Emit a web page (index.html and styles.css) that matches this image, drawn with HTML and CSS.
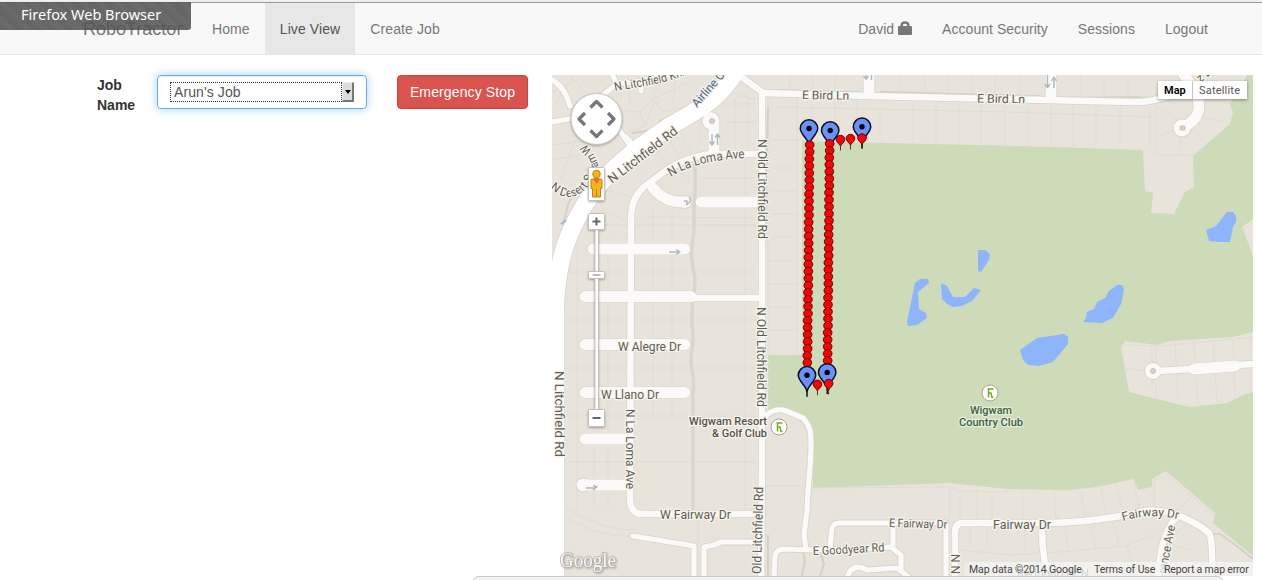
FILE: index.html
```html
<!DOCTYPE html>
<html lang="en">
<head>
<meta charset="utf-8">
<title>RoboTractor - Live View</title>
<link rel="stylesheet" href="styles.css">
</head>
<body>
<nav class="navbar">
  <a class="brand">RoboTractor</a>
  <ul class="nav">
    <li class="nav-item">Home</li>
    <li class="nav-item active">Live View</li>
    <li class="nav-item">Create Job</li>
  </ul>
  <ul class="nav nav-right">
    <li class="nav-item">David
      <svg class="lock" viewBox="0 0 14 14"><path d="M3.700 6V4.200Q3.700 1.500 7 1.500T10.300 4.200V6" fill="none" stroke="#777" stroke-width="2.500"/><rect x="0" y="5" width="14" height="9" rx="1" fill="#777"/></svg>
    </li>
    <li class="nav-item">Account Security</li>
    <li class="nav-item">Sessions</li>
    <li class="nav-item">Logout</li>
  </ul>
</nav>
<div class="window-label">Firefox Web Browser</div>

<main class="content">
  <label class="job-label">Job Name</label>
  <div class="select">
    <span class="select-value">Arun's Job</span>
    <span class="select-arrow"></span>
  </div>
  <button class="stop">Emergency Stop</button>

  <div class="map">
  <svg class="map-canvas" viewBox="552 75 701 501">
    <defs>
      <g id="roads-s">
        <path d="M552 80C561 84 566 92 570 106"/><path d="M552 122L574 118"/><path d="M604 94L617 84L640 81L684 72"/><path d="M612 74L617 85"/><path d="M641 84V91"/>
        <path d="M618 128L634 151"/><path d="M626 137L636 148"/>
        <path d="M633 536L694 546V578"/><path d="M704 578V547L714 545L721 542H756"/>
        <path d="M764 418C770 411 778 408 786 411L803 418C810 425 811 433 811 442C811 470 808 480 807 510L804 535L806 549"/>
        <path d="M774 578L775 556Q776 550 783 549L815 550L860 549L891 547L901 555V568"/>
        <path d="M830 547L832 528Q833 523 840 523H946V578"/><path d="M893 525V545"/>
        <path d="M847 578C850 568 857 564 867 570L897 568L910 578"/>
      </g>
      <g id="roads-m">
        <path d="M736 73L762 92"/><path d="M762 92V474L761 578"/><path d="M762 93L870 96L1000 99L1130 102C1155 103 1160 96 1195 92"/>
        <path d="M764 154H716C700 154 685 159 668 169L645 186C634 196 631 206 631 220L630 495Q629 515 644 514H758"/>
        <path d="M690 298H762"/>
        <path d="M955 578V532Q955 523 963 523H1045C1080 523 1120 517 1145 511C1170 507 1200 525 1209 533Q1213 540 1212 578"/>
        <path d="M1042 524C1042 545 1043 550 1047 578"/><path d="M1176 517C1163 535 1160 550 1158 578"/>
        <path d="M1156 371L1192 369"/><path d="M1236 365L1254 364"/>
      </g>
      <g id="roads-l">
        <path d="M869 70V92"/><path d="M1051 70V96"/>
        <path d="M1181 70L1193 88Q1209 115 1182 128"/>
        <path d="M711 121L714 124V150"/><path d="M711 118V121"/>
        <path d="M653 188C661 198 672 203 686 202"/>
        <path d="M701 202H760"/><path d="M593 249H685"/><path d="M585 296.500H691"/><path d="M585 344.500H685"/><path d="M585 392.500H685"/><path d="M585 439H628"/><path d="M583 485H628"/>
        <path d="M1194 369L1235 366"/>
      </g>
      <path id="highway" d="M738 68C719 100 700 109 670 126L637 149C615 167 600 180 584 206C572 226 557 253 555 310V590"/>
    </defs>
    <rect x="552" y="75" width="701" height="501" fill="#e8e4dc"/>
    <path fill="#cddbb9" d="M802 141L1020 146L1143 150L1145 191L1153 193L1151 213L1174 214L1185 192L1194 187L1193 156L1230 124L1233 112L1230 104L1236 94L1247 75H1253V219L1242 227L1253 256V332L1233 337L1170 341L1158 345L1125 341L1121 347L1129 392L1190 407L1227 403L1243 395L1253 392V556L1213 523L1215 513L1166 471L1152 479V487L1138 490L1134 479L1097 487L1068 490L1007 489L950 483L813 488L811 430L785 410L768 415V355H802Z"/>
    <path fill="#d2e2be" d="M1120 99L1160 98L1145 96Z"/>

    <!-- parcel boundaries -->
    <path class="lots" d="M768 98V355M797 98V355M768 140H802M768 168H797M768 191H797M768 214H797M768 237H797M768 261H797M768 284H797M768 307H797M768 330H797M775 107L1010 112L1150 117M812 98V140M835 98V140M857 98V141M880 106V142M913 103V143M936 103V143M959 104V144M981 104V145M1005 105V146M1028 106V146M1051 106V147M1073 106V147M1096 106V148M1120 106V148M1150 107V148M1156 107V155H1193M1156 106L1180 120M1156 137L1176 130M1181 137L1179 155M1196 133L1207 145M1206 118L1230 123M790 75V88M813 75V88M835 75V89M900 75V90M925 75V91M948 75V91M972 75V92M995 75V93M1020 75V94M1081 75V95M1104 75V95M1128 75V95
      M567 225H760M567 272H760M567 320H760M567 368H760M567 416H760M567 462H760M577 230V510M594 226V508M608 235V510M653 210V416M672 210V416M745 160V510M700 178H760M700 226H760M698 508V576M565 508C595 522 605 530 635 530M565 518C595 532 605 536 635 536M764 486H813M813 488L950 487L960 491L1010 492M950 488V520M960 491V520M977 491V520M992 492V520M1023 493V520M1054 492L1056 520M1081 491L1085 518M1101 488L1106 516M1116 484L1123 512M1134 482L1139 508M1154 480V508M1191 497L1174 513M1154 480L1168 476L1213 514M970 527V548M987 527V548M1025 528V552M960 550L1010 555L1060 552L1125 546L1155 534M1065 527L1068 548M1091 525L1096 549M1113 521L1119 546M1127 546L1135 574M1166 543L1190 550M1190 520L1166 543
      M1125 345L1162 346L1253 337M1152 346V390M1156 346V397M1175 342L1178 402M1194 341L1198 405M1213 340L1217 402M1233 338L1235 397M1250 334V390M1125 368L1145 371M1243 230L1253 222
      M555 105L575 75M570 75L585 92M585 75L602 96M552 92L567 85M630 105L628 75M651 102L663 77M672 105L676 80M640 112L655 98L690 82M645 126L655 101L663 112L690 106M610 110L640 112L645 126L625 134M552 145L590 140M552 160L580 155M560 180L575 140M600 210L625 220M606 190L634 198M632 165L645 177M655 150L668 164M668 140L679 155M681 132L690 150M700 118L700 143M725 90L755 100M723 104H758M727 122H757M735 98V148M748 100V148M645 217L760 218M670 168L692 180"/>
    <path class="trail creek" d="M694 164C698 185 693 200 694 220S690 240 692 260S697 270 693 300S696 330 692 350S696 370 693 395V510"/>
    <path class="trail" d="M632 133C650 131 657 129 660 121C672 116 684 112 698 104S718 84 727 75M563 226C567 212 566 198 580 190M768 107L765 250V420M778 90L860 92M880 92L1040 96M1062 98L1140 97M1211 534H1220C1230 540 1240 549 1253 559M803 552L805 560L802 576M820 552L824 564L820 576M768 535V576"/>

    <use href="#roads-s" class="case-s"/><use href="#roads-m" class="case-m"/><use href="#roads-l" class="case-l"/><use href="#highway" class="case-h"/>
    <g class="case-dot"><circle cx="711" cy="121" r="9.500"/><circle cx="583" cy="485" r="7.500"/><circle cx="1182" cy="128" r="9.500"/><circle cx="1153" cy="371" r="9"/><circle cx="685" cy="202" r="7"/></g>
    <use href="#roads-s" class="fill-s"/><use href="#roads-m" class="fill-m"/><use href="#roads-l" class="fill-l"/><use href="#highway" class="fill-h"/>
    <g fill="#fbfaf8"><circle cx="711" cy="121" r="8.500"/><circle cx="583" cy="485" r="6.500"/><circle cx="1182" cy="128" r="8.500"/><circle cx="1153" cy="371" r="8"/><circle cx="685" cy="202" r="6"/></g>
    <g class="island"><circle cx="712" cy="121" r="2.500"/><rect x="1180" y="126" width="5" height="4" rx="1"/><circle cx="1153" cy="371" r="2.500"/></g>
    <path d="M552 300H564V576H552Z" fill="#fff"/>
    <g class="oneway">
      <path d="M712 145V134M709.500 141.500L712 145L714.500 141.500M717.500 145V134M715 137.500L717.500 134L720 137.500"/>
      <path d="M1047.500 75V87M1045 84L1047.500 87.500L1050 84M1054 88V78M1051.500 81L1054 77L1056.500 81M866 75V79M863.500 76L866 79L868.500 76M871.500 75V80M669 252H679M676 249.500L680 252L676 254.500M586 488H596M593 485.500L597 487L593 490M684 201H687V205M690 197V202L686 205"/>
    </g>
    <path d="M561 224L566 220" stroke="#a5b8d0" stroke-width="2"/>

    <g fill="#8eb5fb">
      <path d="M1227 212L1233 212L1236 216V222L1233 227L1230 242H1220L1209 241L1206 230L1216 226Z"/>
      <path d="M978 250H985L990 254L989 260L981 272L978 271Z"/>
      <path d="M915 283L920 279H928L929 283L918 292L919 309L926 313L927 318L917 325L908 326L907 322Z"/>
      <path d="M941 283L947 286L953 297H965L974 288L981 290L972 301L962 306L953 307L947 304L942 299Z"/>
      <path d="M1083 322L1086 318L1087 312L1094 309L1097 302L1105 298L1109 291L1117 285H1122L1124 289L1121 304L1113 318L1102 323Z"/>
      <path d="M1020 350L1037 338L1064 334L1068 337V344L1053 362L1039 366L1028 365L1023 360Z"/>
    </g>

    <!-- street names -->
    <defs>
      <path id="p-knolls" d="M615 91C640 86 660 86 690 73"/>
      <path id="p-laloma" d="M671 177Q697 160 747 158"/>
      <path id="p-desert" d="M550 188C570 207 590 195 600 160"/>
      <path id="p-dream" d="M599 172Q599 154 578 137"/>
      <path id="p-goodyear" d="M813 555Q845 554 888 551"/>
      <path id="p-fairway" d="M1123 521Q1152 512 1182 520"/>
    </defs>
    <g class="street">
      <text><textPath href="#p-knolls" textLength="72">N Litchfield Knl</textPath></text>
      <text class="big"><textPath href="#p-laloma" textLength="77">N La Loma Ave</textPath></text>
      <text><textPath href="#p-desert" textLength="54">N Desert S</textPath></text>
      <text><textPath href="#p-dream" textLength="32">eam W</textPath></text>
      <text class="airline" transform="translate(697 108) rotate(-49)" textLength="50">Airline Cir</text>
      <text class="big" transform="translate(612 184) rotate(-37.500)" textLength="84">N Litchfield Rd</text>
      <text x="802" y="99" textLength="47" transform="rotate(1 802 100)">E Bird Ln</text>
      <text x="977" y="102.500" textLength="48" transform="rotate(1 977 102)">E Bird Ln</text>
      <text class="big" transform="translate(757.500 139) rotate(90)" textLength="100">N Old Litchfield Rd</text>
      <text class="big" transform="translate(757 307) rotate(90)" textLength="100">N Old Litchfield Rd</text>
      <text class="big" transform="translate(761 574) rotate(-88.500)" textLength="87">Old Litchfield Rd</text>
      <text class="big" transform="translate(555 371) rotate(90)" textLength="86">N Litchfield Rd</text>
      <text x="618" y="351" textLength="63">W Alegre Dr</text>
      <text x="601" y="398.500" textLength="58">W Llano Dr</text>
      <text x="660" y="518.500" textLength="71">W Fairway Dr</text>
      <text class="big" transform="translate(625.500 409) rotate(90)" textLength="80">N La Loma Ave</text>
      <text x="889" y="527" textLength="58" transform="rotate(1.500 889 527)">E Fairway Dr</text>
      <text x="993" y="528.500" textLength="58">Fairway Dr</text>
      <text><textPath href="#p-goodyear" textLength="72">E Goodyear Rd</textPath></text>
      <text><textPath href="#p-fairway" textLength="56">Fairway Dr</textPath></text>
      <text transform="translate(951 554) rotate(90)" textLength="20">N N</text>
      <text transform="translate(1166 574) rotate(-79)" textLength="49">rence Ave</text>
      <text transform="translate(1200 83) rotate(-38)">ᴢ D</text>
      <text x="1017" y="578" textLength="72">Redondo Dr N</text>
    </g>
    <g class="place">
      <text x="767" y="424.500" text-anchor="end" textLength="78">Wigwam Resort</text>
      <text x="767" y="436.500" text-anchor="end" textLength="55">&amp; Golf Club</text>
      <g class="park"><text x="991" y="413.500" text-anchor="middle" textLength="42">Wigwam</text>
      <text x="991" y="425.500" text-anchor="middle" textLength="64">Country Club</text></g>
    </g>
    <g id="golf-icons">
      <g transform="translate(779 427)"><circle r="8" class="poi"/><path class="golfer" d="M-2.500 -4H3.500M-1.500 -4V4.500M-1.500 0H1L2 4.500H3.500"/></g>
      <g transform="translate(990 393)"><circle r="8" class="poi"/><path class="golfer" d="M-2.500 -4H3.500M-1.500 -4V4.500M-1.500 0H1L2 4.500H3.500"/></g>
    </g>

    <g id="pins"></g>

    <text class="logo" x="560" y="566.500" textLength="56">Google</text>

    <!-- pan, street view and zoom controls -->
    <g class="controls">
      <circle cx="596.500" cy="119" r="25.500" class="pan"/>
      <path class="chev" d="M590.500 107.500L596.500 101.500L602.500 107.500M590.500 130.500L596.500 136.500L602.500 130.500M585 113L579 119L585 125M608 113L614 119L608 125"/>
      <rect x="588.500" y="167.500" width="16" height="33" rx="1" class="ctl"/>
      <g class="pegman"><path d="M591 179.500Q596.500 177 602 179.500V188.500H600.500V197H592.500V188.500H591Z"/><circle cx="596.500" cy="174" r="3.800"/><path d="M593 179H600L596.500 183.500Z" class="bib"/><path d="M596.500 189V197" /></g>
      <rect x="595" y="230" width="3.500" height="180" class="track"/>
      <rect x="588.500" y="213.500" width="16" height="16" rx="1" class="ctl"/><path d="M592.500 221.500H600.500M596.500 217.500V225.500" class="sign"/>
      <rect x="588.500" y="271.500" width="16" height="7" rx="1" class="ctl"/><path d="M592.500 275H600.500" class="sign thin"/>
      <rect x="588.500" y="409.500" width="16" height="17" rx="1" class="ctl"/><path d="M592.500 418H600.500" class="sign"/>
    </g>
  </svg>
    <div class="map-type"><span class="type-on">Map</span><span class="type-off">Satellite</span></div>
    <div class="credits"><span class="c1">Map data ©2014 Google</span><span class="c2">Terms of Use</span><span class="c3">Report a map error</span></div>
  </div>
</main>
<div class="bottom-bar"></div>
<script src="pins.js"></script>
</body>
</html>
```
FILE: pins.js
```js
const layer = document.getElementById('pins');

function add(tag, attrs) {
  const el = document.createElementNS('http://www.w3.org/2000/svg', tag);
  for (const k in attrs) el.setAttribute(k, attrs[k]);
  layer.appendChild(el);
}
function waypoint(x, y) {
  add('path', {class: 'pin-red', d: `M${x} ${y + 11}V${y + 7}C${x} ${y + 5} ${x - 4.4} ${y + 3} ${x - 4.4} ${y}A4.4 4.2 0 0 1 ${x + 4.4} ${y}C${x + 4.4} ${y + 3} ${x} ${y + 5} ${x} ${y + 7}`});
}
function corner(x, y) {
  add('path', {class: 'pin-blue', d: `M${x} ${y + 21.5}V${y + 17}C${x} ${y + 11} ${x - 8.7} ${y + 6} ${x - 8.7} ${y}A8.7 8.7 0 0 1 ${x + 8.7} ${y}C${x + 8.7} ${y + 6} ${x} ${y + 11} ${x} ${y + 17}`});
  add('circle', {cx: x, cy: y, r: 2.7});
}
function row(x0, x1, y0, y1, n) {
  for (let i = 0; i < n; i++) {
    const t = i / (n - 1);
    waypoint(Math.round((x0 + (x1 - x0) * t) * 3) / 3, y0 + (y1 - y0) * t);
  }
}

corner(809, 128.5);
corner(830.2, 130.5);
corner(862, 126.8);
row(809.6, 807.4, 145, 362.8, 32);
row(829.6, 827.5, 143.7, 360.8, 32);
waypoint(840.5, 139.5);
waypoint(850.5, 138.5);
waypoint(862, 138);
corner(807, 375.3);
corner(827.2, 372.4);
waypoint(817.5, 384.2);
waypoint(828.6, 383.5);

document.querySelectorAll('[textLength]').forEach(t => t.setAttribute('lengthAdjust', 'spacingAndGlyphs'));
```
FILE: styles.css
```css
* { box-sizing: border-box; }
body {
  margin: 0;
  height: 580px;
  overflow: hidden;
  position: relative;
  background: #fff;
  font-family: "Liberation Sans", Arial, sans-serif;
  font-size: 14px;
  line-height: 20px;
  color: #333;
  border-top: 2px solid #f0f0f0;
}
.navbar {
  height: 53px;
  padding: 0 39px 0 83px;
  display: flex;
  background: #f8f8f8;
  border-top: 1px solid #999;
  border-bottom: 1px solid #e7e7e7;
  color: #777;
}
.brand { width: 114px; padding-top: 16px; font-size: 18px; }
.nav { display: flex; list-style: none; margin: 0; padding: 0; }
.nav-item { padding: 16px 15px; letter-spacing: .1px; white-space: nowrap; }
.nav-item.active { background: #e7e7e7; color: #555; }
.nav-right { margin-left: auto; }
.nav-right .nav-item { letter-spacing: .04px; }
.lock { width: 14px; height: 14px; vertical-align: -1px; }
.window-label {
  position: absolute;
  left: 0;
  top: -2px;
  width: 191px;
  height: 30px;
  padding: 5px 0 0 21px;
  border-radius: 0 0 3px 0;
  background: repeating-linear-gradient(45deg, rgba(80,80,80,.89) 0 1px, rgba(92,92,92,.89) 1px 2px);
  color: #fff;
  font: 14.5px/19px "Noto Sans", sans-serif;
  white-space: nowrap;
}
.content { display: flex; align-items: flex-start; padding: 20px 9px 0 97px; }
.job-label { width: 60px; padding-right: 15px; font-weight: bold; }
.select {
  width: 210px;
  height: 34px;
  display: flex;
  padding: 6px 12px;
  border: 1px solid #66afe9;
  border-radius: 4px;
  box-shadow: inset 0 1px 1px rgba(0,0,0,.075), 0 0 8px rgba(102,175,233,.6);
  color: #555;
}
.select-value { width: 172px; height: 20px; padding-left: 3px; border: 1px dotted #333; line-height: 18px; letter-spacing: .1px; }
.select-arrow {
  width: 12px;
  height: 20px;
  display: flex;
  align-items: center;
  justify-content: center;
  background: #dcdcdc;
  border: solid #eee;
  border-width: 1px 2px 2px 1px;
  border-right-color: #777;
  border-bottom-color: #777;
}
.select-arrow::after { content: ""; border: 3.5px solid transparent; border-top: 4px solid #000; border-bottom: 0; flex: none; }
.stop {
  width: 131px;
  height: 34px;
  margin: 0 24px 0 30px;
  padding: 0;
  border: 1px solid #d43f3a;
  border-radius: 4px;
  background: #d9534f;
  color: #fff;
  font: 14px/20px "Liberation Sans", Arial, sans-serif;
  letter-spacing: .12px;
}
.map { position: relative; width: 701px; height: 501px; overflow: hidden; flex: none; font-family: Roboto, sans-serif; }
.map-canvas { display: block; width: 701px; height: 501px; }
.map-canvas path { stroke-linejoin: round; }
.lots { fill: none; stroke: #ded9d0; stroke-width: .8; }
.trail { fill: none; stroke: #d6d1c7; stroke-width: 2; }
.creek { stroke: #dad6cd; stroke-width: 3.5; }
use { fill: none; stroke-linecap: round; }
.case-s, .case-m, .case-l, .case-h { stroke: #d8d3c9; }
.fill-s, .fill-m, .fill-l { stroke: #fbfaf8; }
.fill-h { stroke: #fff; stroke-width: 17.5px; }
.case-h { stroke-width: 19px; }
.case-s { stroke-width: 6.8px; }
.fill-s { stroke-width: 5.2px; }
.case-m { stroke-width: 8px; }
.fill-m { stroke-width: 6.5px; }
.case-l { stroke-width: 12.2px; }
.fill-l { stroke-width: 10.8px; }
.case-dot { fill: #d8d3c9; }
.island { fill: #d8d3c9; stroke: #c5bfb3; }
.oneway { fill: none; stroke: #aeb8bc; stroke-width: 1.4; }
.street { font-size: 12px; fill: #625e52; stroke: #f6f4ef; stroke-width: 2.5px; paint-order: stroke; stroke-linejoin: round; }
.street .big { font-size: 13px; }
.street .airline { fill: #4e6285; }
.place { font-size: 11.5px; font-weight: 500; fill: #585247; stroke: #f7f5f0; stroke-width: 2.5px; paint-order: stroke; }
.place .park { fill: #3c6140; stroke: #e4edda; }
.poi { fill: #fff; stroke: #a8a397; stroke-width: 1; }
.golfer { fill: none; stroke: #6eb01c; stroke-width: 1.5; }
.pin-red { fill: #f00; stroke: #3a0000; stroke-width: .8; }
.pin-blue { fill: #6991fd; stroke: #0a0f1c; stroke-width: 1.5; }
.logo { font: 20px "Liberation Serif", serif; fill: #f7f6f3; stroke: #b5b1a9; stroke-width: 1.4px; paint-order: stroke; filter: drop-shadow(1px 1px 1px #aaa); }
.pan { fill: #fff; stroke: #c8c5c0; }
.controls { filter: drop-shadow(0 1px 1px rgba(0,0,0,.3)); }
.chev { fill: none; stroke: #777; stroke-width: 3.2; }
.ctl { fill: #fff; stroke: #c4c1bc; }
.track { fill: #fff; stroke: #bbb; stroke-width: .8; }
.sign { fill: none; stroke: #666; stroke-width: 2; }
.thin { stroke: #999; stroke-width: 1.3; }
.pegman { fill: #f9b313; stroke: #bd7710; stroke-width: .9; }
.pegman .bib { fill: #f2653a; stroke: none; }
.map-type {
  position: absolute;
  right: 6px;
  top: 6px;
  height: 18px;
  display: flex;
  background: #fff;
  box-shadow: 0 1px 3px rgba(0,0,0,.4);
  font-size: 11px;
  line-height: 19px;
}
.type-on { width: 35px; padding-left: 6px; font-weight: 600; color: #000; border-right: 1px solid #c4c4c4; }
.type-off { width: 54px; padding-left: 6px; color: #565656; letter-spacing: .2px; }
.credits {
  position: absolute;
  right: 0;
  bottom: 0;
  width: 289px;
  height: 14px;
  padding-left: 5px;
  display: flex;
  background: linear-gradient(90deg, rgba(245,245,245,.3), rgba(245,245,245,.75) 8px);
  font-size: 10.5px;
  line-height: 15px;
  letter-spacing: -.08px;
  color: #444;
  white-space: nowrap;
}
.c1 { width: 125px; }
.c2 { width: 70px; }
.c3 { letter-spacing: -.17px; }
.bottom-bar {
  position: absolute;
  left: 473px;
  top: 574px;
  width: 750px;
  height: 10px;
  border: 1px solid #ccc;
  border-radius: 5px 5px 0 0;
  background: #f2f2f2;
}
```
